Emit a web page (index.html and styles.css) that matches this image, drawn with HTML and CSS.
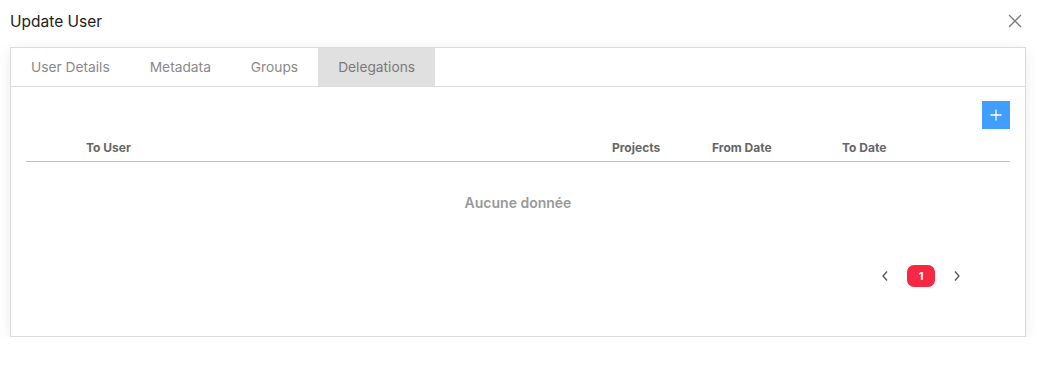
FILE: index.html
```html
<!DOCTYPE html>
<html lang="en">
<head>
<meta charset="utf-8">
<title>Update User</title>
<link rel="stylesheet" href="styles.css">
</head>
<body>
<div class="dialog">
  <div class="dialog-header">
    <span class="dialog-title">Update User</span>
    <button class="close-btn" aria-label="Close">
      <svg width="14" height="14" viewBox="0 0 14 14"><path d="M1 1L13 13M13 1L1 13" stroke="#7a7a7a" stroke-width="1.3" fill="none"/></svg>
    </button>
  </div>
  <div class="card">
    <div class="tabs">
      <div class="tab">User Details</div>
      <div class="tab">Metadata</div>
      <div class="tab">Groups</div>
      <div class="tab active">Delegations</div>
    </div>
    <div class="content">
      <div class="toolbar">
        <button class="add-btn" aria-label="Add">
          <svg width="12" height="12" viewBox="0 0 12 12"><path d="M6 0.5V11.5M0.5 6H11.5" stroke="#fff" stroke-width="1.3" fill="none"/></svg>
        </button>
      </div>
      <div class="table">
        <div class="thead">
          <div class="th"></div>
          <div class="th">To User</div>
          <div class="th">Projects</div>
          <div class="th">From Date</div>
          <div class="th">To Date</div>
        </div>
        <div class="empty">Aucune donnée</div>
      </div>
      <div class="pagination">
        <span class="pg-arrow">
          <svg width="8" height="12" viewBox="0 0 8 12"><path d="M6 1.5L2 6L6 10.5" stroke="#555" stroke-width="1.3" fill="none"/></svg>
        </span>
        <span class="pg-page">1</span>
        <span class="pg-arrow">
          <svg width="8" height="12" viewBox="0 0 8 12"><path d="M2 1.5L6 6L2 10.5" stroke="#555" stroke-width="1.3" fill="none"/></svg>
        </span>
      </div>
    </div>
  </div>
</div>
</body>
</html>
```
FILE: styles.css
```css
* { box-sizing: border-box; }
body {
  margin: 0;
  background: #fff;
  font-family: Inter, "Noto Sans", sans-serif;
}
.dialog {
  width: 1037px;
  padding: 0 11px 0 10px;
}
.dialog-header {
  height: 47px;
  display: flex;
  align-items: flex-start;
  justify-content: space-between;
  padding-top: 12px;
}
.dialog-title {
  font-size: 15.5px;
  color: #222;
  line-height: 20px;
}
.close-btn {
  border: 0;
  background: none;
  padding: 0;
  margin: 2px 4px 0 0;
  width: 14px;
  height: 14px;
  display: flex;
}
.card {
  border: 1px solid #dcdcdc;
  height: 290px;
  box-shadow: 0 2px 12px rgba(0,0,0,0.08);
  display: flex;
  flex-direction: column;
}
.tabs {
  display: flex;
  height: 39px;
  border-bottom: 1px solid #dcdcdc;
}
.tab {
  padding: 0 20px;
  font-size: 13.75px;
  color: #8a8a8a;
  display: flex;
  align-items: center;
}
.tab.active {
  background: #e0e0e0;
  color: #7a7a7a;
}
.content {
  padding: 14px 15px 0 15px;
  display: flex;
  flex-direction: column;
}
.toolbar {
  display: flex;
  justify-content: flex-end;
}
.add-btn {
  width: 28px;
  height: 28px;
  background: #409eff;
  border: 0;
  padding: 0;
  display: flex;
  align-items: center;
  justify-content: center;
}
.table { margin-top: 5px; }
.thead {
  display: grid;
  grid-template-columns: 50px 526px 100px 130px 1fr;
  height: 28px;
  border-bottom: 1px solid #bdbdbd;
  align-items: center;
}
.th {
  padding-left: 10px;
  font-size: 12px;
  font-weight: 700;
  color: #666;
}
.empty {
  height: 80px;
  display: flex;
  align-items: center;
  justify-content: center;
  font-size: 14px;
  font-weight: 600;
  color: #999;
}
.pagination {
  display: flex;
  justify-content: flex-end;
  align-items: center;
  margin-top: 23px;
  padding-right: 39px;
}
.pg-arrow {
  width: 28px;
  height: 22px;
  display: flex;
  align-items: center;
  justify-content: center;
}
.pg-page {
  width: 28px;
  height: 22px;
  border-radius: 7px;
  background: #f72843;
  color: #fff;
  font-size: 11px;
  font-weight: 700;
  display: flex;
  align-items: center;
  justify-content: center;
  margin: 0 8px;
}
```
